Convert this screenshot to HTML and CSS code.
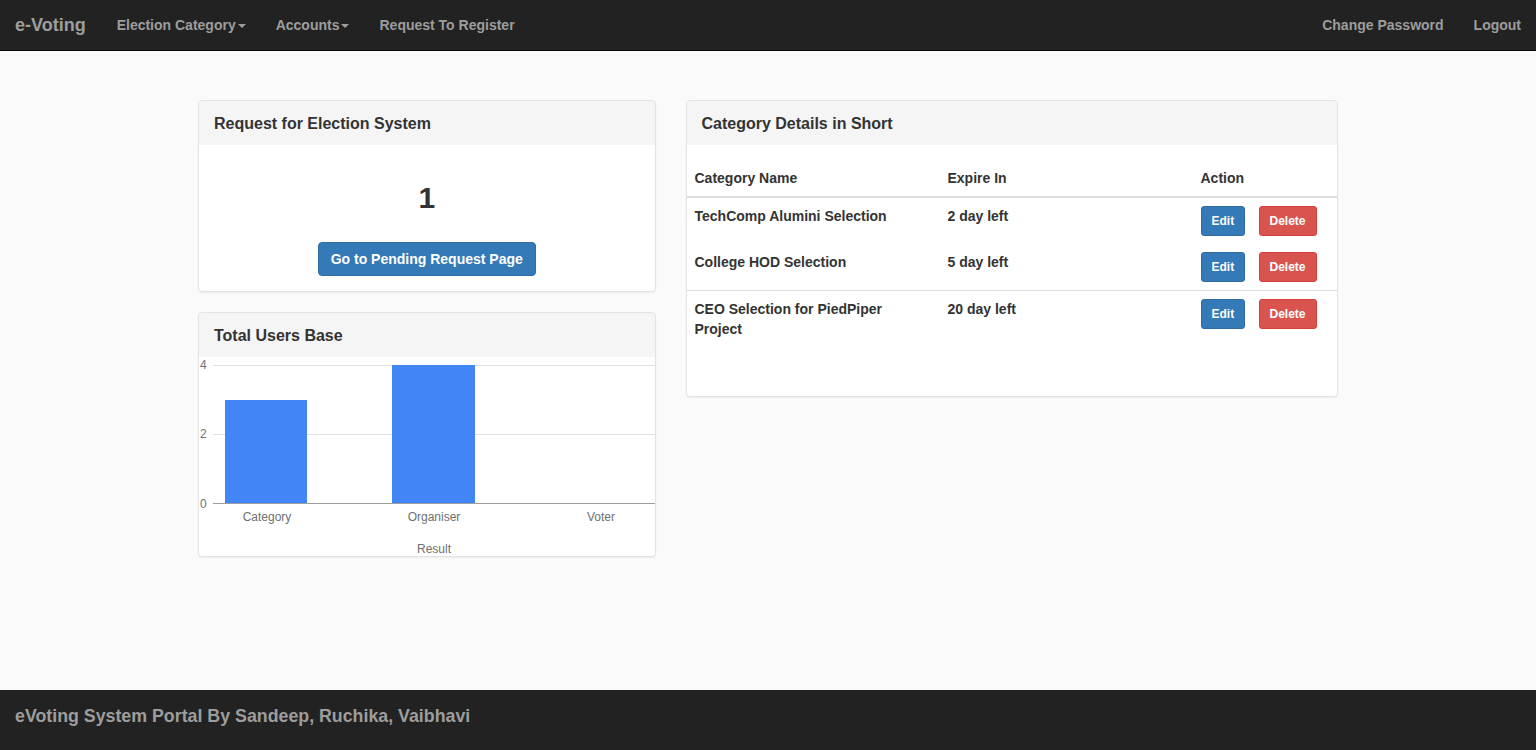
FILE: index.html
```html
<!DOCTYPE html>
<html lang="en">
<head>
<meta charset="utf-8">
<title>e-Voting</title>
<link rel="stylesheet" href="styles.css">
</head>
<body>
<nav class="navbar">
  <div class="nav-left">
    <a class="brand" href="#">e-Voting</a>
    <a class="nav-link" href="#">Election Category<span class="caret"></span></a>
    <a class="nav-link" href="#">Accounts<span class="caret"></span></a>
    <a class="nav-link" href="#">Request To Register</a>
  </div>
  <div class="nav-right">
    <a class="nav-link" href="#">Change Password</a>
    <a class="nav-link" href="#">Logout</a>
  </div>
</nav>

<main class="main">
  <div class="container">
    <div class="col-left">
      <section class="panel">
        <div class="panel-heading"><h3 class="panel-title">Request for Election System</h3></div>
        <div class="panel-body center">
          <div class="big-number">1</div>
          <a class="btn btn-primary" href="#">Go to Pending Request Page</a>
        </div>
      </section>

      <section class="panel">
        <div class="panel-heading"><h3 class="panel-title">Total Users Base</h3></div>
        <div class="chart">
          <svg class="chart-svg" viewBox="0 0 456 200" width="456" height="200">
            <line x1="14" y1="8.5" x2="456" y2="8.5" stroke="#e0e0e0" stroke-width="1"/>
            <line x1="14" y1="77.5" x2="456" y2="77.5" stroke="#e0e0e0" stroke-width="1"/>
            <rect x="26" y="43" width="82" height="103" fill="#4285f4"/>
            <rect x="193" y="8" width="83" height="138" fill="#4285f4"/>
            <line x1="14" y1="146.5" x2="456" y2="146.5" stroke="#9e9e9e" stroke-width="1"/>
            <g class="axis-text">
              <text x="1" y="12">4</text>
              <text x="1" y="81">2</text>
              <text x="1" y="151">0</text>
              <text x="68" y="164" text-anchor="middle">Category</text>
              <text x="235" y="164" text-anchor="middle">Organiser</text>
              <text x="402" y="164" text-anchor="middle">Voter</text>
              <text x="235" y="196" text-anchor="middle">Result</text>
            </g>
          </svg>
        </div>
      </section>
    </div>

    <div class="col-right">
      <section class="panel">
        <div class="panel-heading"><h3 class="panel-title">Category Details in Short</h3></div>
        <div class="table-wrap">
          <table class="table">
            <thead>
              <tr>
                <th class="c1">Category Name</th>
                <th class="c2">Expire In</th>
                <th class="c3">Action</th>
                <th class="c4"></th>
              </tr>
            </thead>
            <tbody>
              <tr>
                <td>TechComp Alumini Selection</td>
                <td>2 day left</td>
                <td><a class="btn btn-sm btn-primary" href="#">Edit</a></td>
                <td><a class="btn btn-sm btn-danger" href="#">Delete</a></td>
              </tr>
              <tr class="no-border">
                <td>College HOD Selection</td>
                <td>5 day left</td>
                <td><a class="btn btn-sm btn-primary" href="#">Edit</a></td>
                <td><a class="btn btn-sm btn-danger" href="#">Delete</a></td>
              </tr>
              <tr>
                <td>CEO Selection for PiedPiper Project</td>
                <td>20 day left</td>
                <td><a class="btn btn-sm btn-primary" href="#">Edit</a></td>
                <td><a class="btn btn-sm btn-danger" href="#">Delete</a></td>
              </tr>
            </tbody>
          </table>
        </div>
      </section>
    </div>
  </div>
</main>

<footer class="footer">
  <span>eVoting System Portal By Sandeep, Ruchika, Vaibhavi</span>
</footer>
</body>
</html>
```
FILE: styles.css
```css
* { box-sizing: border-box; }
html, body { height: 100%; }
body {
  margin: 0;
  font-family: "Liberation Sans", Arial, Helvetica, sans-serif;
  font-size: 14px;
  line-height: 20px;
  color: #333;
  background: #fafafa;
  display: flex;
  flex-direction: column;
  min-height: 100vh;
}
a { text-decoration: none; }

.navbar {
  height: 51px;
  background: #222;
  border-bottom: 1px solid #080808;
  display: flex;
  justify-content: space-between;
  align-items: stretch;
  flex-shrink: 0;
}
.nav-left, .nav-right { display: flex; align-items: stretch; }
.brand {
  padding: 0 16px 0 15px;
  font-size: 18px;
  font-weight: bold;
  color: #9d9d9d;
  display: flex;
  align-items: center;
}
.nav-link {
  padding: 0 15px;
  font-size: 14px;
  font-weight: bold;
  color: #9d9d9d;
  display: flex;
  align-items: center;
}
.caret {
  display: inline-block;
  width: 0; height: 0;
  margin-left: 2px;
  border-top: 4px solid #9d9d9d;
  border-left: 4px solid transparent;
  border-right: 4px solid transparent;
  margin-top: 2px;
}

.main { flex: 1; padding-top: 49px; }
.container {
  width: 1170px;
  margin: 0 auto;
  display: flex;
}
.col-left { width: 487.5px; padding: 0 15px; }
.col-right { width: 682.5px; padding: 0 15px; }

.panel {
  background: #fff;
  border: 1px solid #e3e3e3;
  border-radius: 4px;
  box-shadow: 0 1px 2px rgba(0,0,0,0.06);
  margin-bottom: 20px;
  overflow: hidden;
}
.panel-heading {
  background: #f5f5f5;
  padding: 11px 15px 9px;
  height: 44px;
}
.panel-title {
  margin: 0;
  font-size: 16px;
  line-height: 24px;
  font-weight: bold;
  color: #333;
}
.panel-body { padding: 15px; }
.center { text-align: center; }
.big-number {
  margin: 21px 0 28px;
  font-size: 30px;
  line-height: 33px;
  font-weight: bold;
  color: #333;
}

.btn {
  display: inline-block;
  border: 1px solid transparent;
  border-radius: 4px;
  font-weight: bold;
  color: #fff;
  text-align: center;
  vertical-align: middle;
}
.center .btn { padding: 6px 12px; font-size: 14px; line-height: 20px; height: 34px; }
.btn-primary { background: #337ab7; border-color: #2e6da4; }
.btn-danger { background: #d9534f; border-color: #d43f3a; }
.btn-sm { padding: 5px 10px; font-size: 12px; line-height: 18px; border-radius: 3px; }

.chart { height: 199px; }
.chart-svg { display: block; }
.axis-text text {
  font-family: "Liberation Sans", Arial, sans-serif;
  font-size: 12px;
  fill: #707070;
}

.table-wrap { padding-top: 15px; padding-bottom: 49px; }
.table {
  width: 100%;
  border-collapse: collapse;
  table-layout: fixed;
}
.table th, .table td {
  padding: 8px;
  text-align: left;
  vertical-align: top;
  font-weight: bold;
  font-size: 14px;
  line-height: 20px;
}
.table thead th { border-bottom: 2px solid #ddd; }
.table tbody td { border-top: 1px solid #ddd; }
.table tbody tr:first-child td { border-top: 0; }
.table tbody tr.no-border td { border-top: 0; }
.c1 { width: 253px; }
.c2 { width: 253px; }
.c3 { width: 58px; }

.footer {
  height: 60px;
  background: #222;
  color: #9d9d9d;
  font-size: 17.8px;
  font-weight: bold;
  padding: 16px 15px 0;
  line-height: 20px;
  flex-shrink: 0;
}
```
